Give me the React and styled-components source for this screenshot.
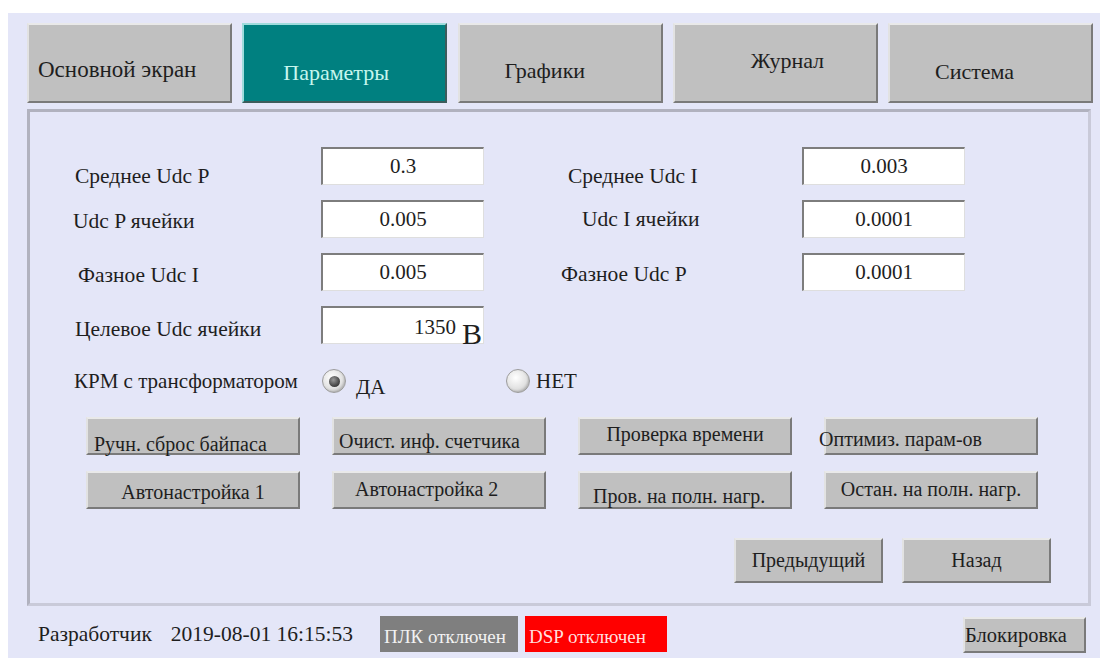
import React, { useState } from 'react'
import styled, { createGlobalStyle, css } from "styled-components";

const GlobalStyle = createGlobalStyle`
  body {
    margin: 0;
    background: #ffffff;
    font-family: "Liberation Serif", "DejaVu Serif", serif;
  }
`;

const tabs = [
  { name: "Основной экран", pl: 9, pt: 32, size: 23 },
  { name: "Параметры", pl: 39, pt: 35, size: 22 },
  { name: "Графики", pl: 45, pt: 33, size: 22 },
  { name: "Журнал", pl: 76, pt: 23, size: 22 },
  { name: "Система", pl: 45, pt: 34, size: 22 },
];

const fields = [
  { left: "Среднее Udc P", lpl: 0, lpt: 17, value: "0.3", right: "Среднее Udc I", rpl: 84, rpt: 17, rvalue: "0.003" },
  { left: "Udc P ячейки", lpl: -2, lpt: 9, value: "0.005", right: "Udc I ячейки", rpl: 98, rpt: 7, rvalue: "0.0001" },
  { left: "Фазное Udc I", lpl: 3, lpt: 10, value: "0.005", right: "Фазное Udc P", rpl: 77, rpt: 9, rvalue: "0.0001" },
];

const actions = [
  { text: "Ручн. сброс байпаса", pt: 14, dx: 6 },
  { text: "Очист. инф. счетчика", pt: 11, dx: 5 },
  { text: "Проверка времени", pt: 4, center: true },
  { text: "Оптимиз. парам-ов", pt: 9, dx: -7 },
  { text: "Автонастройка 1", pt: 8, center: true },
  { text: "Автонастройка 2", pt: 5, dx: 21 },
  { text: "Пров. на полн. нагр.", pt: 12, dx: 13 },
  { text: "Остан. на полн. нагр.", pt: 5, center: true },
];

const raised = css`
  box-sizing: border-box;
  border: 2px solid;
  border-color: #e9e9e9 #7a7a7a #7a7a7a #e2e2e2;
  background: #c0c0c0;
  color: #1e1e1e;
  white-space: nowrap;
  cursor: pointer;
`;

const Screen = styled.div`
  margin: 13px 0 0 8px;
  width: 1092px;
  height: 645px;
  box-sizing: border-box;
  padding: 10px 0 0 19px;
  background: #e4e6f8;
  display: flex;
  flex-direction: column;
`;

const TabBar = styled.div`
  display: grid;
  grid-template-columns: repeat(5, 205px);
  column-gap: 10.25px;
  height: 80px;
`;

const Tab = styled.div`
  ${raised};
  background: ${(p) => (p.$active ? "#008080" : "#c0c0c0")};
  border-color: ${(p) =>
    p.$active ? "#9fdcdc #3c5c5c #3c5c5c #9fdcdc" : "#e9e9e9 #7a7a7a #7a7a7a #e2e2e2"};
  color: ${(p) => (p.$active ? "#c6f6ee" : "#1e1e1e")};
  font-size: ${(p) => p.$size}px;
  line-height: 25px;
  padding: ${(p) => p.$pt}px 0 0 ${(p) => p.$pl}px;
`;

const Panel = styled.div`
  margin-top: 6px;
  width: 1064px;
  height: 497px;
  box-sizing: border-box;
  border: 3px solid;
  border-color: #b1b2bf #c9cad9 #c9cad9 #b1b2bf;
  padding: 35px 0 0 45px;
  display: flex;
  flex-direction: column;
`;

const FieldGrid = styled.div`
  display: grid;
  grid-template-columns: 246px 163px 318px 163px;
  grid-auto-rows: 38px;
  row-gap: 15px;
`;

const Label = styled.div`
  font-size: 21.5px;
  line-height: 25px;
  color: #1e1e1e;
  white-space: nowrap;
  padding-top: ${(p) => p.$pt}px;
  margin-left: ${(p) => p.$pl}px;
`;

const ValueBox = styled.div`
  box-sizing: border-box;
  background: #ffffff;
  border-style: solid;
  border-width: 2px 1px 1px 2px;
  border-color: #7d7d7d #dedede #dedede #7d7d7d;
  display: flex;
  align-items: center;
  justify-content: ${(p) => (p.$end ? "flex-end" : "center")};
  padding-right: ${(p) => (p.$end ? 1 : 0)}px;
  font-size: 21px;
  color: #1e1e1e;
`;

const Value = styled.span`
  padding-top: ${(p) => p.$pt || 0}px;
`;

const Unit = styled.span`
  font-size: 30px;
  line-height: 30px;
  align-self: flex-end;
  margin: 0 0 -6px 6px;
`;

const RadioRow = styled.div`
  display: flex;
  align-items: center;
  height: 24px;
  margin-top: 25px;
  font-size: 21px;
  color: #1e1e1e;
`;

const RadioLabel = styled.div`
  width: 248px;
  margin-left: -1px;
  white-space: nowrap;
`;

const RadioOption = styled.label`
  display: flex;
  align-items: center;
  width: ${(p) => p.$width || "auto"};
  cursor: pointer;
`;

const Circle = styled.span`
  box-sizing: border-box;
  width: 24px;
  height: 24px;
  border-radius: 50%;
  border: 1px solid #9c9c9c;
  background: radial-gradient(circle at 40% 35%, #ffffff 0%, #e2e2e2 55%, #b4b4b4 100%);
  display: flex;
  align-items: center;
  justify-content: center;
  box-shadow: inset -1px -1px 2px rgba(0, 0, 0, 0.15);
`;

const Dot = styled.span`
  width: 11px;
  height: 11px;
  border-radius: 50%;
  background: radial-gradient(circle at 40% 35%, #9a9a9a 0%, #4a4a4a 60%, #262626 100%);
`;

const RadioText = styled.span`
  margin-left: ${(p) => p.$gap}px;
  margin-top: ${(p) => p.$drop || 0}px;
`;

const ActionGrid = styled.div`
  display: grid;
  grid-template-columns: repeat(4, 214px);
  column-gap: 32px;
  grid-auto-rows: 38px;
  row-gap: 16px;
  margin: 24px 0 0 11px;
`;

const ActionButton = styled.div`
  ${raised};
  display: flex;
  align-items: flex-start;
  justify-content: ${(p) => (p.$center ? "center" : "flex-start")};
  padding-top: ${(p) => p.$pt}px;
  font-size: 20px;
  line-height: 23px;
`;

const ButtonText = styled.span`
  margin-left: ${(p) => p.$dx || 0}px;
`;

const NavRow = styled.div`
  display: flex;
  justify-content: flex-end;
  gap: 19px;
  margin-top: 29px;
  padding-right: 37px;
`;

const NavButton = styled.div`
  ${raised};
  width: 149px;
  height: 45px;
  display: flex;
  align-items: center;
  justify-content: center;
  font-size: 20px;
`;

const StatusBar = styled.div`
  display: flex;
  align-items: center;
  height: 38px;
  margin-top: 9px;
  padding-left: 11px;
  font-size: 21.5px;
  color: #1e1e1e;
`;

const StatusText = styled.span`
  margin-left: ${(p) => p.$gap || 0}px;
  white-space: nowrap;
`;

const Badge = styled.div`
  box-sizing: border-box;
  width: ${(p) => p.$width}px;
  height: 36px;
  margin-left: ${(p) => p.$gap}px;
  background: ${(p) => p.$bg};
  color: ${(p) => p.$fg};
  font-size: 19px;
  display: flex;
  align-items: center;
  padding: 6px 0 0 4px;
  white-space: nowrap;
`;

const LockButton = styled.div`
  ${raised};
  width: 123px;
  height: 36px;
  margin: 2px 14px 0 auto;
  display: flex;
  align-items: center;
  font-size: 20.5px;
`;

const App = () => {
  const [tab, setTab] = useState("Параметры");
  const [withTransformer, setWithTransformer] = useState(true);

  return (
    <>
      <GlobalStyle />
      <Screen>
        <TabBar>
          {tabs.map((t) => (
            <Tab
              key={t.name}
              $active={tab === t.name}
              $pl={t.pl}
              $pt={t.pt}
              $size={t.size}
              onClick={() => setTab(t.name)}
            >
              {t.name}
            </Tab>
          ))}
        </TabBar>

        <Panel>
          <FieldGrid>
            {fields.map((f) => (
              <React.Fragment key={f.left}>
                <Label $pl={f.lpl} $pt={f.lpt}>{f.left}</Label>
                <ValueBox><Value>{f.value}</Value></ValueBox>
                <Label $pl={f.rpl} $pt={f.rpt}>{f.right}</Label>
                <ValueBox><Value>{f.rvalue}</Value></ValueBox>
              </React.Fragment>
            ))}
            <Label $pl={0} $pt={11}>Целевое Udc ячейки</Label>
            <ValueBox $end>
              <Value $pt={4}>1350</Value>
              <Unit>В</Unit>
            </ValueBox>
          </FieldGrid>

          <RadioRow>
            <RadioLabel>КРМ с трансформатором</RadioLabel>
            <RadioOption $width="184px" onClick={() => setWithTransformer(true)}>
              <Circle>{withTransformer && <Dot />}</Circle>
              <RadioText $gap={10} $drop={12}>ДА</RadioText>
            </RadioOption>
            <RadioOption onClick={() => setWithTransformer(false)}>
              <Circle>{!withTransformer && <Dot />}</Circle>
              <RadioText $gap={6}>НЕТ</RadioText>
            </RadioOption>
          </RadioRow>

          <ActionGrid>
            {actions.map((a) => (
              <ActionButton key={a.text} $center={a.center} $pt={a.pt}>
                <ButtonText $dx={a.dx}>{a.text}</ButtonText>
              </ActionButton>
            ))}
          </ActionGrid>

          <NavRow>
            <NavButton>Предыдущий</NavButton>
            <NavButton>Назад</NavButton>
          </NavRow>
        </Panel>

        <StatusBar>
          <StatusText>Разработчик</StatusText>
          <StatusText $gap={19}>2019-08-01 16:15:53</StatusText>
          <Badge $width={138} $gap={27} $bg="#7f7f7f" $fg="#f2f2f2">ПЛК отключен</Badge>
          <Badge $width={142} $gap={7} $bg="#ff0000" $fg="#ffdede">DSP отключен</Badge>
          <LockButton>Блокировка</LockButton>
        </StatusBar>
      </Screen>
    </>
  )
}

export default App;
